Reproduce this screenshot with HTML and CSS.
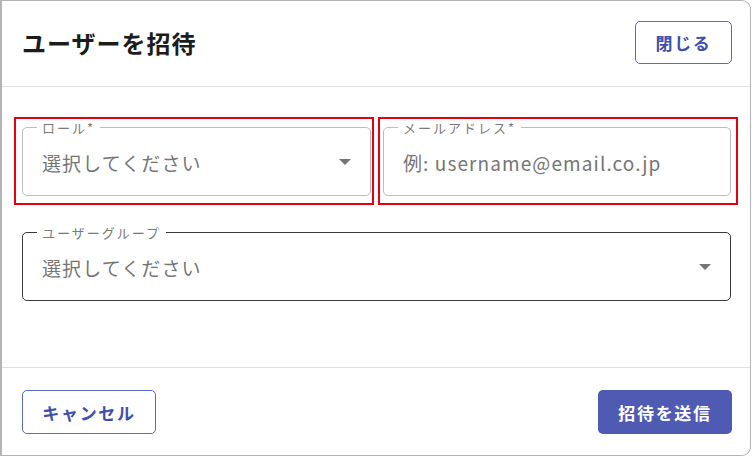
FILE: index.html
```html
<!DOCTYPE html>
<html lang="ja">
<head>
<meta charset="utf-8">
<link rel="stylesheet" href="styles.css">
</head>
<body>
<div class="dialog">
  <header class="dlg-header">
    <h1 class="dlg-title">ユーザーを招待</h1>
    <button class="btn btn-outline btn-close">閉じる</button>
  </header>
  <main class="dlg-content">
    <div class="row-top">
      <div class="mark mark-left">
        <div class="field">
          <span class="field-label">ロール*</span>
          <span class="field-value">選択してください</span>
          <svg class="caret" viewBox="0 0 12 6" width="12" height="6"><path d="M0 0 L12 0 L6 6 Z" fill="#757575"/></svg>
        </div>
      </div>
      <div class="mark mark-right">
        <div class="field">
          <span class="field-label">メールアドレス*</span>
          <span class="field-value">例: username@email.co.jp</span>
        </div>
      </div>
    </div>
    <div class="field field-active field-wide">
      <span class="field-label">ユーザーグループ</span>
      <span class="field-value">選択してください</span>
      <svg class="caret" viewBox="0 0 12 6" width="12" height="6"><path d="M0 0 L12 0 L6 6 Z" fill="#757575"/></svg>
    </div>
  </main>
  <footer class="dlg-footer">
    <button class="btn btn-outline">キャンセル</button>
    <button class="btn btn-primary">招待を送信</button>
  </footer>
</div>
</body>
</html>
```

FILE: styles.css
```css
* { box-sizing: border-box; }
html, body { margin: 0; padding: 0; background: #ffffff; }
body {
  font-family: "Noto Sans CJK JP", "Noto Sans", sans-serif;
  color: #1a1a1a;
  width: 752px;
  height: 456px;
  overflow: hidden;
}
.dialog {
  width: 751px;
  height: 456px;
  border: 1px solid #b4b4b4;
  border-left: 2px solid #b4b4b4;
  border-radius: 0 9px 9px 0;
  display: flex;
  flex-direction: column;
  background: #fff;
}
.dlg-header {
  height: 86px;
  border-bottom: 1px solid #e0e0e0;
  display: flex;
  align-items: center;
  justify-content: space-between;
  padding: 0 18px 3px 20px;
  flex: none;
}
.dlg-title {
  margin: 0;
  font-size: 24px;
  font-weight: 700;
  letter-spacing: 1px;
  color: #1c1c1c;
}
.btn {
  font-family: "Noto Sans CJK JP", "Noto Sans", sans-serif;
  font-size: 17px;
  font-weight: 700;
  letter-spacing: 1.7px;
  border-radius: 5px;
  height: 44px;
  cursor: pointer;
  padding: 0;
}
.btn-outline {
  background: #fff;
  border: 1.5px solid #5c6bc0;
  color: #3f4fae;
}
.btn-close {
  width: 97px;
  height: 43px;
  margin-top: 1px;
}
.dlg-content {
  flex: 1;
  padding: 30px 0 0 12px;
  border-bottom: 1px solid #e0e0e0;
}
.row-top {
  display: flex;
  gap: 4px;
}
.mark {
  width: 360px;
  height: 88px;
  border: 2px solid #e60012;
  padding-top: 8px;
}
.mark-left { padding-left: 6px; padding-right: 1px; }
.mark-right { padding-left: 3px; padding-right: 5px; }
.field {
  position: relative;
  height: 69px;
  border: 1px solid #bdbdbd;
  border-radius: 5px;
  display: flex;
  align-items: center;
  padding: 1px 19px 0 19px;
}
.field-active { border-color: #3a3a3a; }
.field-wide {
  margin-left: 8px;
  margin-top: 27px;
  width: 709px;
}
.field-label {
  position: absolute;
  top: -8px;
  left: 14px;
  padding: 0 5px;
  background: #fff;
  font-size: 13px;
  line-height: 16px;
  letter-spacing: 2px;
  color: #7a7a7a;
}
.field-value {
  font-size: 19px;
  letter-spacing: 1.1px;
  color: #757575;
  flex: 1;
}
.caret {
  flex: none;
}
.dlg-footer {
  height: 87px;
  flex: none;
  display: flex;
  align-items: center;
  justify-content: space-between;
  padding: 1px 18px 0 20px;
}
.dlg-footer .btn { width: 134px; }
.btn-primary {
  background: #4f5bb3;
  border: none;
  color: #ffffff;
}
```
